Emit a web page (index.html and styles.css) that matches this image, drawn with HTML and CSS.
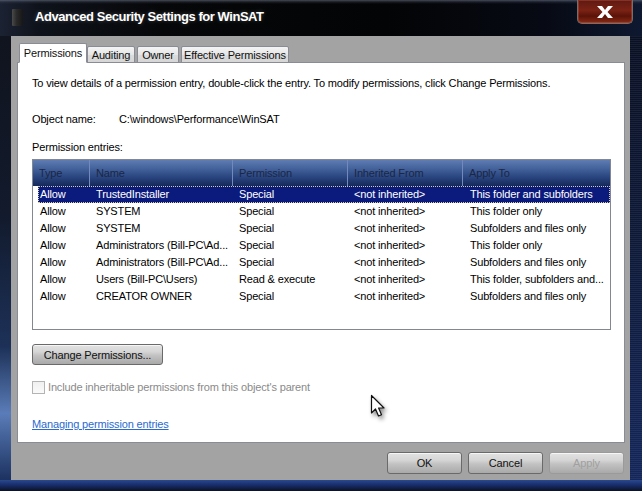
FILE: index.html
```html
<!DOCTYPE html>
<html>
<head>
<meta charset="utf-8">
<title>Advanced Security Settings for WinSAT</title>
<link rel="stylesheet" href="styles.css">
</head>
<body>
<div class="screen">
  <div class="titlebar">
    <div class="appicon"></div>
    <div class="title">Advanced Security Settings for WinSAT</div>
    <div class="close">
      <svg width="18" height="14" viewBox="0 0 18 14"><path d="M1 1 H6 L9 5 L12 1 H17 L11.5 7 L17 13 H12 L9 9 L6 13 H1 L6.5 7 Z" fill="#fff"/></svg>
    </div>
  </div>
  <div class="middle">
    <div class="frame-left"></div>
    <div class="client">
      <div class="tabs">
        <div class="tab active t-perm">Permissions</div>
        <div class="tab t-audit">Auditing</div>
        <div class="tab t-owner">Owner</div>
        <div class="tab t-eff">Effective Permissions</div>
      </div>
      <div class="panel">
        <p class="intro">To view details of a permission entry, double-click the entry. To modify permissions, click Change Permissions.</p>
        <div class="object"><span class="obj-label">Object name:</span><span>C:\windows\Performance\WinSAT</span></div>
        <div class="entries-label">Permission entries:</div>
        <div class="list">
          <div class="list-head">
            <div class="hcell">Type</div>
            <div class="hcell">Name</div>
            <div class="hcell">Permission</div>
            <div class="hcell">Inherited From</div>
            <div class="hcell last">Apply To</div>
          </div>
          <div class="row selected"><span>Allow</span><span>TrustedInstaller</span><span>Special</span><span>&lt;not inherited&gt;</span><span>This folder and subfolders</span></div>
          <div class="row"><span>Allow</span><span>SYSTEM</span><span>Special</span><span>&lt;not inherited&gt;</span><span>This folder only</span></div>
          <div class="row"><span>Allow</span><span>SYSTEM</span><span>Special</span><span>&lt;not inherited&gt;</span><span>Subfolders and files only</span></div>
          <div class="row"><span>Allow</span><span>Administrators (Bill-PC\Ad...</span><span>Special</span><span>&lt;not inherited&gt;</span><span>This folder only</span></div>
          <div class="row"><span>Allow</span><span>Administrators (Bill-PC\Ad...</span><span>Special</span><span>&lt;not inherited&gt;</span><span>Subfolders and files only</span></div>
          <div class="row"><span>Allow</span><span>Users (Bill-PC\Users)</span><span>Read &amp; execute</span><span>&lt;not inherited&gt;</span><span>This folder, subfolders and...</span></div>
          <div class="row"><span>Allow</span><span>CREATOR OWNER</span><span>Special</span><span>&lt;not inherited&gt;</span><span>Subfolders and files only</span></div>
        </div>
        <button class="btn change">Change Permissions...</button>
        <label class="check"><span class="box"></span>Include inheritable permissions from this object's parent</label>
        <a class="link" href="#">Managing permission entries</a>
      </div>
      <div class="footer">
        <button class="btn">OK</button>
        <button class="btn">Cancel</button>
        <button class="btn disabled">Apply</button>
      </div>
    </div>
    <div class="frame-right"></div>
  </div>
  <div class="frame-bottom"></div>
  <svg class="cursor" width="20" height="26" viewBox="0 0 20 26"><path d="M1.5 1.5 V19 L5.5 15 L8.5 22 L11.5 20.8 L8.6 14 H14 Z" fill="#fff" stroke="#111" stroke-width="1.2" stroke-linejoin="round"/></svg>
</div>
</body>
</html>
```

FILE: styles.css
```css
* { box-sizing: border-box; }
html, body { margin: 0; padding: 0; background: #000; }
body {
  font-family: "Liberation Sans", Arial, sans-serif;
  font-size: 11px;
  letter-spacing: -0.15px;
  color: #000;
}
.screen {
  width: 642px;
  height: 491px;
  position: relative;
  overflow: hidden;
  display: flex;
  flex-direction: column;
  background: #020305;
}
.titlebar {
  height: 36px;
  flex: none;
  display: flex;
  align-items: flex-start;
  background:
    linear-gradient(to bottom, rgba(120,130,150,0.55) 0, rgba(60,66,80,0.35) 2px, rgba(0,0,0,0) 4px),
    linear-gradient(to right, #1b2232 0, #0e121a 6%, #060709 25%, #030405 60%, #070a14 85%, #0e1830 100%);
}
.appicon {
  width: 11px;
  height: 17px;
  margin: 9px 0 0 12px;
  background: linear-gradient(to right, #4a4a4a, #2a2a2a 40%, #161616);
  border-radius: 1px;
}
.title {
  margin-left: 12px;
  line-height: 34px;
  font-weight: bold;
  font-size: 13px;
  letter-spacing: -0.45px;
  color: #fff;
  text-shadow: 0 0 4px rgba(255,255,255,0.25);
}
.close {
  margin-left: auto;
  margin-right: 9px;
  width: 56px;
  height: 24px;
  border: 1px solid #7a6e6a;
  border-top: none;
  border-radius: 0 0 5px 5px;
  background: linear-gradient(to bottom, #5e1a12 0, #7a2214 45%, #5a1309 70%, #8a2a14 100%);
  box-shadow: inset 0 0 0 1px rgba(255,120,100,0.25);
  display: flex;
  align-items: center;
  justify-content: center;
}
.middle {
  display: flex;
  height: 444px;
  flex: none;
}
.frame-left {
  width: 11px;
  background:
    linear-gradient(to bottom, #10141e 0, #121a2c 40%, #1d3158 70%, #5a7cb8 85%, #1c3260 100%);
}
.frame-right {
  width: 12px;
  background:
    repeating-linear-gradient(to bottom, rgba(255,255,255,0.06) 0 1px, rgba(0,0,0,0) 1px 2px),
    linear-gradient(to bottom, #0a1024 0, #0e1a3a 50%, #14265a 100%);
}
.frame-bottom {
  flex: 1;
  background: linear-gradient(to bottom, #2a4a8e 0, #1a3070 40%, #0a1228 100%);
}
.client {
  width: 619px;
  background: #a3a3a3;
  padding: 7px 0 0 0;
  display: flex;
  flex-direction: column;
}
.tabs {
  display: flex;
  align-items: flex-end;
  padding-left: 8px;
  height: 20px;
  margin-bottom: -1px;
  position: relative;
  z-index: 1;
}
.tab {
  height: 17px;
  line-height: 16px;
  text-align: center;
  margin-left: 2px;
  border: 1px solid #898c95;
  border-radius: 2px 2px 0 0;
  background: linear-gradient(to bottom, #f4f4f4, #e6e6e6 50%, #dcdcdc 51%, #d6d6d6);
  color: #111;
}
.tab.active {
  height: 20px;
  line-height: 18px;
  margin-left: 0;
  border-bottom-color: #fff;
  background: #fff;
}
.tab.active + .tab { margin-left: 0; }
.t-perm { width: 68px; }
.t-audit { width: 48px; }
.t-owner { width: 42px; }
.t-eff { width: 108px; }
.panel {
  margin: 0 5px 0 6px;
  height: 381px;
  background: #fff;
  border: 1px solid #898c95;
  padding: 13px 0 0 14px;
  display: flex;
  flex-direction: column;
  align-items: flex-start;
}
.intro {
  margin: 0;
  line-height: 14px;
}
.object {
  margin-top: 22px;
  line-height: 14px;
  display: flex;
}
.obj-label { width: 87px; }
.entries-label {
  margin-top: 14px;
  line-height: 14px;
}
.list {
  margin-top: 5px;
  width: 579px;
  height: 171px;
  border: 1px solid #828790;
}
.list-head {
  height: 26px;
  display: grid;
  grid-template-columns: 57px 143px 115px 115px 1fr;
  background: linear-gradient(to bottom, #5f7db3 0, #46649d 30%, #2a4680 65%, #15295a 100%);
}
.hcell {
  border-right: 1px solid #7189bb;
  padding-left: 6px;
  line-height: 26px;
  color: #1a2744;
}
.hcell.last { border-right: none; }
.row {
  margin-left: 5px;
  height: 17px;
  line-height: 17px;
  display: grid;
  grid-template-columns: 52px 143px 115px 115px 1fr;
  white-space: nowrap;
}
.row span { padding-left: 6px; overflow: hidden; }
.row span:first-child { padding-left: 2px; }
.row span:last-child { padding-left: 7px; }
.row.selected {
  background: #0b1a7d;
  color: #fff;
  outline: 1px dotted #d8d0a0;
  outline-offset: -1px;
}
.btn {
  font-family: inherit;
  font-size: 11px;
  letter-spacing: -0.15px;
  color: #111;
  border: 1px solid #6a6a6a;
  border-radius: 3px;
  background: linear-gradient(to bottom, #e2e2e2 0, #d6d6d6 35%, #c2c2c2 55%, #a9a9a9 100%);
  box-shadow: inset 0 1px 0 rgba(255,255,255,0.7);
  padding: 0;
  height: 22px;
}
.change {
  margin-top: 14px;
  width: 131px;
  height: 21px;
}
.check {
  margin-top: 15px;
  display: flex;
  align-items: center;
  color: #8a8a8a;
  line-height: 14px;
}
.box {
  width: 13px;
  height: 13px;
  border: 1px solid #b4b4b4;
  background: linear-gradient(to bottom, #f0f0f0, #fafafa);
  margin-right: 3px;
}
.link {
  margin-top: 23px;
  color: #2a6ad0;
  text-decoration: underline;
  line-height: 14px;
}
.footer {
  display: flex;
  justify-content: flex-end;
  gap: 6px;
  padding: 9px 6px 0 0;
}
.footer .btn { width: 75px; }
.btn.disabled { color: #a0a0a0; border-color: #9a9a9a; }
.cursor {
  position: absolute;
  left: 370px;
  top: 394px;
  filter: drop-shadow(2px 3px 2px rgba(0,0,0,0.45));
}
```
